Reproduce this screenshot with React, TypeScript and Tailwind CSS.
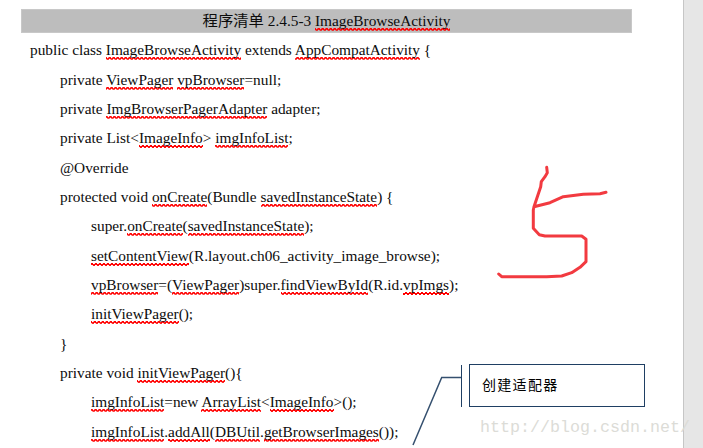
const S = ({ children }: { children: string }) => (
  <span className="bg-[linear-gradient(45deg,transparent_55%,#ff0000_55%,#ff0000_78%,transparent_78%),linear-gradient(135deg,transparent_22%,#ff0000_22%,#ff0000_45%,transparent_45%)] bg-[length:4px_3px] bg-bottom bg-repeat-x pb-[2px]">{children}</span>
);

const Row = ({ indent, children }: { indent: string; children: React.ReactNode }) => (
  <div className={`flex h-[29.35px] items-center whitespace-pre ${indent}`}>
    <span>{children}</span>
  </div>
);

export default function App() {
  return (
    <div className="relative flex h-[448px] w-[703px] overflow-hidden bg-white font-['Liberation_Serif','Noto_Sans_CJK_SC',serif] text-[15.33px] text-[#0c0c0c]">
      {/* Page */}
      <div className="flex-1 pl-[21px] pr-[51px] pt-[9px]">
        <div className="mb-[3px] flex h-[24px] items-center justify-center whitespace-pre border border-[#c8c8c8] bg-[#bdbdbd]">
          <span>
            程序清单 2.4.5-3 <S>ImageBrowseActivity</S>
          </span>
        </div>
        <Row indent="pl-[9px]">
          public class <S>ImageBrowseActivity</S> extends <S>AppCompatActivity</S> {"{"}
        </Row>
        <Row indent="pl-[39px]">
          private <S>ViewPager</S> <S>vpBrowser</S>=null;
        </Row>
        <Row indent="pl-[39px]">
          private <S>ImgBrowserPagerAdapter</S> adapter;
        </Row>
        <Row indent="pl-[39px]">
          private List&lt;<S>ImageInfo</S>&gt; <S>imgInfoList</S>;
        </Row>
        <Row indent="pl-[39px]">@Override</Row>
        <Row indent="pl-[39px]">
          protected void <S>onCreate</S>(Bundle <S>savedInstanceState</S>) {"{"}
        </Row>
        <Row indent="pl-[70px]">
          super.<S>onCreate</S>(<S>savedInstanceState</S>);
        </Row>
        <Row indent="pl-[70px]">
          <S>setContentView</S>(R.layout.ch06_activity_image_browse);
        </Row>
        <Row indent="pl-[70px]">
          <S>vpBrowser</S>=(<S>ViewPager</S>)super.<S>findViewById</S>(R.id.<S>vpImgs</S>);
        </Row>
        <Row indent="pl-[70px]">
          <S>initViewPager</S>();
        </Row>
        <Row indent="pl-[39px]">{"}"}</Row>
        <Row indent="pl-[39px]">
          private void <S>initViewPager</S>(){"{"}
        </Row>
        <Row indent="pl-[70px]">
          <S>imgInfoList</S>=new <S>ArrayList</S>&lt;<S>ImageInfo</S>&gt;();
        </Row>
        <Row indent="pl-[70px]">
          <S>imgInfoList</S>.<S>addAll</S>(<S>DBUtil</S>.<S>getBrowserImages</S>());
        </Row>
      </div>

      {/* Right gutter */}
      <div className="w-[20px] border-l border-[#c6c6c6] bg-[#e6e6e6]" />

      {/* Hand-drawn 5 */}
      <svg className="absolute left-0 top-0" width="703" height="448" fill="none">
        <path
          d="M546.7 167.3L547.3 172.7L545 176.7L541.3 181.7L540.7 186.7L534 206.7M534 206.7L550 202.7L563.3 196.7L583.3 194.3L600 193.7L606 192.3M534 206.7L533.3 210L533.3 228.3L539.3 234.7L545 236L581.7 236L586 239.3L586 261.7L580 267.3L571.7 272.7L561.7 276L546.7 276.7L501.7 276.7L498.7 274"
          stroke="#f23a40"
          strokeWidth="3"
          strokeLinecap="round"
          strokeLinejoin="round"
        />
        <path d="M461.5 365V407" stroke="#1f3f63" strokeWidth="1" />
        <path d="M461 377.5H441.7L413 445" stroke="#35506f" strokeWidth="1.5" />
      </svg>

      {/* Callout */}
      <div className="absolute left-[469px] top-[364px] flex h-[43px] w-[176px] items-center border border-[#1f3f63] bg-white pb-[2px] pl-[12px] font-['Noto_Sans_CJK_SC',sans-serif] text-[14px] tracking-[1.3px] text-black">
        创建适配器
      </div>

      {/* Watermark */}
      <div className="absolute left-[480px] top-[418px] font-['Liberation_Mono',monospace] text-[16.67px] leading-[20px] text-[#dcdcd7]">
        http://blog.csdn.net/
      </div>
    </div>
  );
}
